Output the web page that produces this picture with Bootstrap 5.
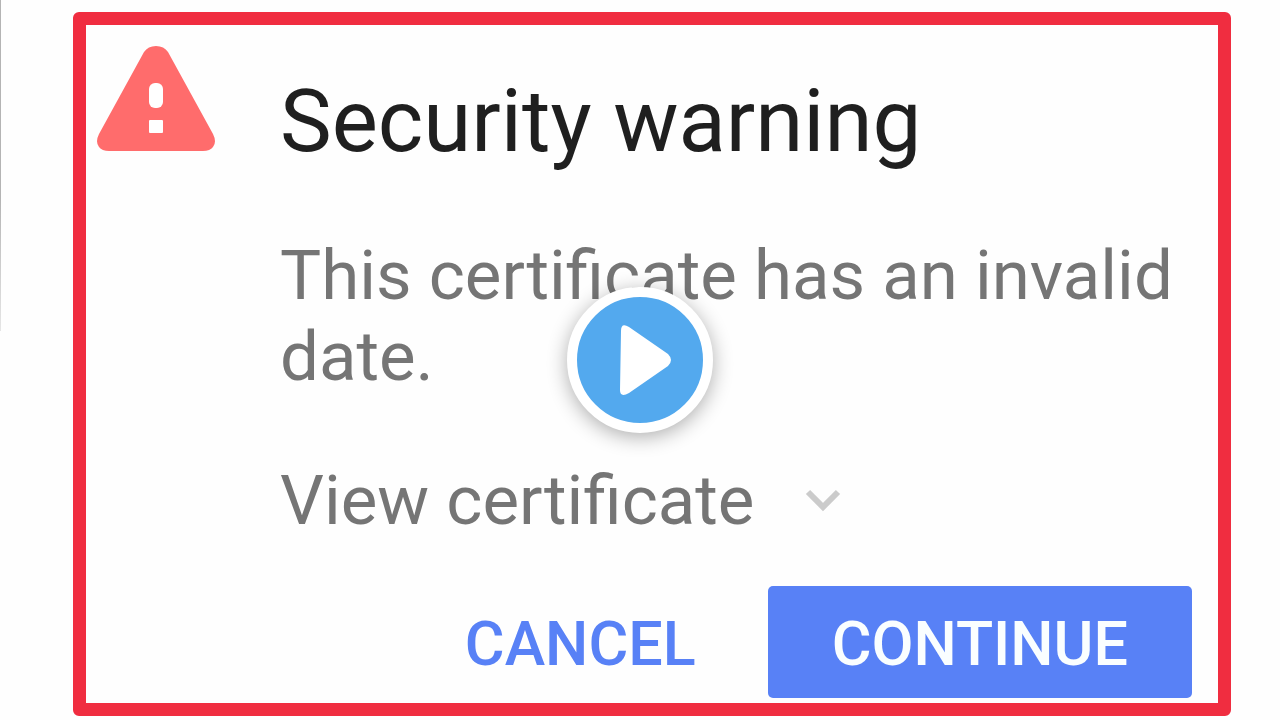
<!DOCTYPE html>
<html lang="en">
<head>
<meta charset="utf-8">
<meta name="viewport" content="width=device-width, initial-scale=1">
<title>Security warning</title>
<link href="https://cdn.jsdelivr.net/npm/bootstrap@5.3.0/dist/css/bootstrap.min.css" rel="stylesheet">
<style>
body { font-family: Roboto, "Liberation Sans", sans-serif; background: #fefefe; }
.stage { min-height: 100vh; padding: 12px 49px 3px 73px; }
.edge-line { top: 0; left: 0; width: 1px; height: 46%; background: linear-gradient(#b4b4b4 60%, #e6e6e6); }
.alert-frame { border: 13px solid #f02d40; border-radius: 6px; background: #fefefe; color: #757575; padding: 0 26px 5px 11px; }
.alert-main { gap: 65px; padding-top: 21px; }
.warn-icon { width: 118px; height: 105px; }
.alert-copy { padding-top: 25px; margin-right: -24px; font-size: 69px; line-height: 81px; }
.alert-title { font-size: 87px; line-height: 100px; font-weight: 400; color: #1f1f1f; margin-bottom: 64px; }
.alert-text { margin-bottom: 63px; }
.view-link { color: inherit; text-decoration: none; gap: 50px; }
.alert-actions { gap: 8px; margin-top: 45px; }
.action { font-size: 61px; line-height: 72px; font-weight: 500; padding: 22px 64px 18px; border: 0; border-radius: 5px; color: #5881f6; }
.action-fill, .action-fill:hover { background: #5881f6; color: #fafeff; }
.play { width: 146px; height: 146px; border: 10px solid #fff; background: #53a9ee; box-shadow: 0 4px 20px rgba(0,0,0,.32); }
</style>
</head>
<body>
<main class="stage position-relative">
  <div class="edge-line position-absolute"></div>
  <section class="alert-frame" aria-labelledby="title">
    <div class="alert-main d-flex align-items-start">
      <svg class="warn-icon flex-shrink-0" viewBox="0 0 118 105" aria-hidden="true">
        <path fill="#ff6c6c" d="M47 6Q51 0 59 0T71 6L116 88Q120 96 116 101Q113 105 106 105H12Q5 105 2 101Q-2 96 2 88Z"/>
        <rect x="52" y="37" width="14" height="25" rx="6" fill="#fff"/>
        <rect x="52" y="74" width="14" height="13" rx="1" fill="#fff"/>
      </svg>
      <div class="alert-copy flex-grow-1">
        <h1 class="alert-title" id="title">Security warning</h1>
        <p class="alert-text">This certificate has an invalid date.</p>
        <a class="view-link d-inline-flex align-items-center align-top" href="#">View certificate
          <svg width="38" height="24" viewBox="0 0 38 24" fill="none" stroke="#cbcbcb" stroke-width="6" aria-hidden="true"><path d="M4 3L19 18L34 3"/></svg>
        </a>
      </div>
    </div>
    <div class="alert-actions d-flex justify-content-end">
      <button type="button" class="btn action">CANCEL</button>
      <button type="button" class="btn action action-fill">CONTINUE</button>
    </div>
  </section>
  <button type="button" class="play rounded-circle p-0 position-absolute top-50 start-50 translate-middle d-flex align-items-center justify-content-center" aria-label="Play">
    <svg width="126" height="126" viewBox="0 0 126 126" aria-hidden="true"><path fill="#fff" d="M44 34Q44 25 52 30L91 57Q97 63 91 69L52 96Q43 101 43 93Z"/></svg>
  </button>
</main>
<script src="https://cdn.jsdelivr.net/npm/bootstrap@5.3.0/dist/js/bootstrap.bundle.min.js"></script>
</body>
</html>
